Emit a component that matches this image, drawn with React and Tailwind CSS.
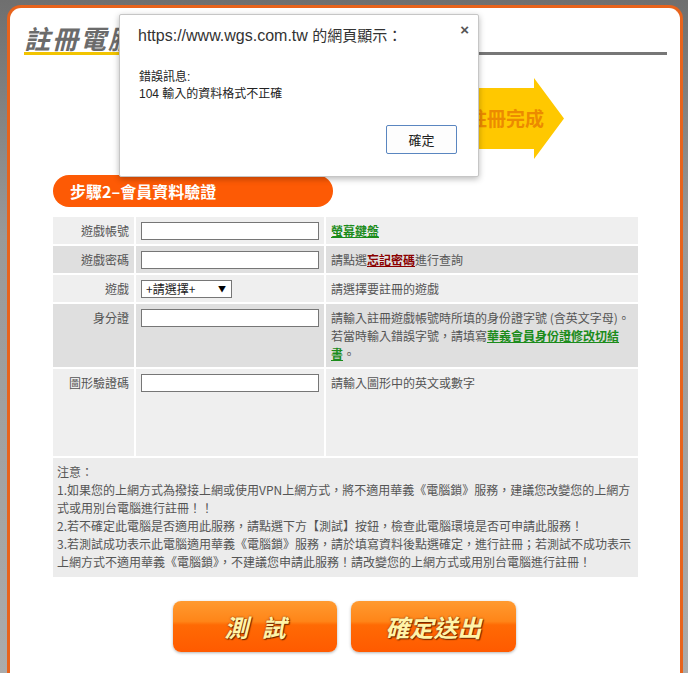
import React from 'react';

const FieldInput = () => (
  <div className="h-[18px] w-[178px] border border-[#767676] bg-white"></div>
);

const Arrow = ({ className, text, textClass }) => (
  <div
    className={`h-[81px] [clip-path:polygon(0_10px,calc(100%-30px)_10px,calc(100%-30px)_0,100%_50%,calc(100%-30px)_100%,calc(100%-30px)_71px,0_71px)] ${className}`}
  >
    <div className={`flex h-full items-center whitespace-nowrap font-bold ${textClass}`}>{text}</div>
  </div>
);

export default function App() {
  return (
    <div className="relative h-[673px] w-[688px] overflow-hidden bg-[linear-gradient(180deg,#6f6f6f_0%,#999_35%,#ababab_100%)] pl-[7px] pr-[5px] pt-[5px] font-['Noto_Sans_CJK_TC',sans-serif]">
      {/* Page frame */}
      <div className="h-[720px] rounded-t-[14px] border-[3px] border-b-0 border-[#e8631c] bg-white">
        {/* Title */}
        <div className="flex items-end pl-[14px] pr-[13px] pt-[15px]">
          <div className="border-b-[3px] border-[#f2c400] pr-[10px] text-[26px] font-bold italic leading-[29px] tracking-[2px] text-[#6b6b6b]">
            註冊電腦鎖
          </div>
          <div className="flex-1 border-b-[3px] border-[#777]"></div>
        </div>

        {/* Steps */}
        <div className="flex h-[120px] items-start gap-[10px] pl-[112px] pt-[23px]">
          <Arrow className="w-[135px] bg-[#fff6dc]" textClass="pl-[20px] text-[16px] text-[#e0b070]" text="步驟1" />
          <Arrow className="w-[135px] bg-[#fff0c8]" textClass="pl-[20px] text-[16px] text-[#e0a050]" text="步驟2" />
          <Arrow className="w-[152px] bg-[#ffc800]" textClass="pl-[56px] text-[19px] text-[#ec8a00]" text="註冊完成" />
        </div>

        {/* Step header */}
        <div className="ml-[43px] h-[32px] w-[280px] rounded-full bg-[#fd5a05] pl-[17px] text-[16px] font-bold leading-[32px] text-white">
          步驟2–會員資料驗證
        </div>

        {/* Form table */}
        <div className="ml-[43px] mt-[10px] grid w-[585px] grid-cols-[81px_188px_312px] gap-[2px] text-[12px] leading-[18px] text-[#555]">
          <div className="bg-[#efefef] pb-[4px] pr-[5px] pt-[5px] text-right">遊戲帳號</div>
          <div className="bg-[#efefef] pb-[4px] pl-[5px] pt-[5px]"><FieldInput /></div>
          <div className="bg-[#efefef] pb-[4px] pl-[5px] pt-[5px]">
            <a className="font-bold text-[#1b8c1b] underline">螢幕鍵盤</a>
          </div>

          <div className="bg-[#dfdfdf] pb-[4px] pr-[5px] pt-[5px] text-right">遊戲密碼</div>
          <div className="bg-[#dfdfdf] pb-[4px] pl-[5px] pt-[5px]"><FieldInput /></div>
          <div className="bg-[#dfdfdf] pb-[4px] pl-[5px] pt-[5px]">
            請點選<a className="font-bold text-[#8a0000] underline">忘記密碼</a>進行查詢
          </div>

          <div className="bg-[#efefef] pb-[4px] pr-[5px] pt-[5px] text-right">遊戲</div>
          <div className="bg-[#efefef] pb-[4px] pl-[5px] pt-[5px]">
            <div className="flex h-[18px] w-[91px] items-center justify-between border border-[#767676] bg-white pl-[4px] pr-[5px] text-[12px] text-[#222]">
              <span>+請選擇+</span>
              <span className="text-[8px] text-black">▼</span>
            </div>
          </div>
          <div className="bg-[#efefef] pb-[4px] pl-[5px] pt-[5px]">請選擇要註冊的遊戲</div>

          <div className="bg-[#dfdfdf] pb-[4px] pr-[5px] pt-[5px] text-right">身分證</div>
          <div className="bg-[#dfdfdf] pb-[4px] pl-[5px] pt-[5px]"><FieldInput /></div>
          <div className="whitespace-nowrap bg-[#dfdfdf] pb-[4px] pl-[5px] pt-[5px]">
            請輸入註冊遊戲帳號時所填的身份證字號 (含英文字母)。
            <br />
            若當時輸入錯誤字號，請填寫
            <a className="font-bold text-[#1b8c1b] underline">
              華義會員身份證修改切結
              <br />
              書
            </a>
            。
          </div>

          <div className="h-[87px] bg-[#efefef] pr-[5px] pt-[5px] text-right">圖形驗證碼</div>
          <div className="h-[87px] bg-[#efefef] pl-[5px] pt-[5px]"><FieldInput /></div>
          <div className="h-[87px] bg-[#efefef] pl-[5px] pt-[5px]">請輸入圖形中的英文或數字</div>
        </div>

        {/* Notes */}
        <div className="ml-[43px] mt-[2px] w-[585px] whitespace-nowrap bg-[#ececec] pb-[6px] pl-[4px] pt-[5px] text-[12px] leading-[18px] text-[#555]">
          注意：
          <br />
          1.如果您的上網方式為撥接上網或使用VPN上網方式，將不適用華義《電腦鎖》服務，建議您改變您的上網方
          <br />
          式或用別台電腦進行註冊！！
          <br />
          2.若不確定此電腦是否適用此服務，請點選下方【測試】按鈕，檢查此電腦環境是否可申請此服務！
          <br />
          3.若測試成功表示此電腦適用華義《電腦鎖》服務，請於填寫資料後點選確定，進行註冊；若測試不成功表示
          <br />
          上網方式不適用華義《電腦鎖》，不建議您申請此服務！請改變您的上網方式或用別台電腦進行註冊！
        </div>

        {/* Buttons */}
        <div className="mt-[24px] flex justify-center gap-[14px] pr-[1px]">
          <button className="h-[51px] w-[164px] rounded-[8px] bg-[linear-gradient(180deg,#ff9a30_0%,#ff8518_40%,#ff6a04_47%,#ff5a00_100%)] pl-[4px] text-[24px] font-bold italic tracking-[4px] text-[#fff4a8] shadow-[0_1px_3px_rgba(0,0,0,0.3)] [text-shadow:1px_1px_1px_#6a2400,0_0_2px_#8a3000]">
            測 試
          </button>
          <button className="h-[51px] w-[165px] rounded-[8px] bg-[linear-gradient(180deg,#ff9a30_0%,#ff8518_40%,#ff6a04_47%,#ff5a00_100%)] text-[24px] font-bold italic text-[#fff4a8] shadow-[0_1px_3px_rgba(0,0,0,0.3)] [text-shadow:1px_1px_1px_#6a2400,0_0_2px_#8a3000]">
            確定送出
          </button>
        </div>
      </div>

      {/* Browser alert dialog */}
      <div className="absolute left-[119px] top-[14px] h-[163px] w-[360px] rounded-[2px] border border-[#c6c6c6] bg-white pt-[11px] shadow-[0_2px_6px_rgba(0,0,0,0.28)]">
        <div className="pl-[18px] font-['Liberation_Sans','Noto_Sans_CJK_TC',sans-serif] text-[16px] leading-[20px] text-[#333]">
          https://www.wgs.com.tw <span className="text-[15px]">的網頁顯示：</span>
        </div>
        <div className="absolute right-[9px] top-[7px] font-['Liberation_Sans',sans-serif] text-[15px] font-bold leading-[16px] text-[#555]">
          ×
        </div>
        <div className="mt-[23px] pl-[19px] font-['Liberation_Sans','Noto_Sans_CJK_TC',sans-serif] text-[12px] leading-[17px] text-[#222]">
          錯誤訊息:
          <br />
          104 輸入的資料格式不正確
        </div>
        <div className="mt-[22px] flex justify-end pr-[21px]">
          <button className="h-[29px] w-[71px] rounded-[2px] border border-[#5a86c0] bg-[#fdfdfd] text-[13px] text-[#222]">
            確定
          </button>
        </div>
      </div>
    </div>
  );
}
